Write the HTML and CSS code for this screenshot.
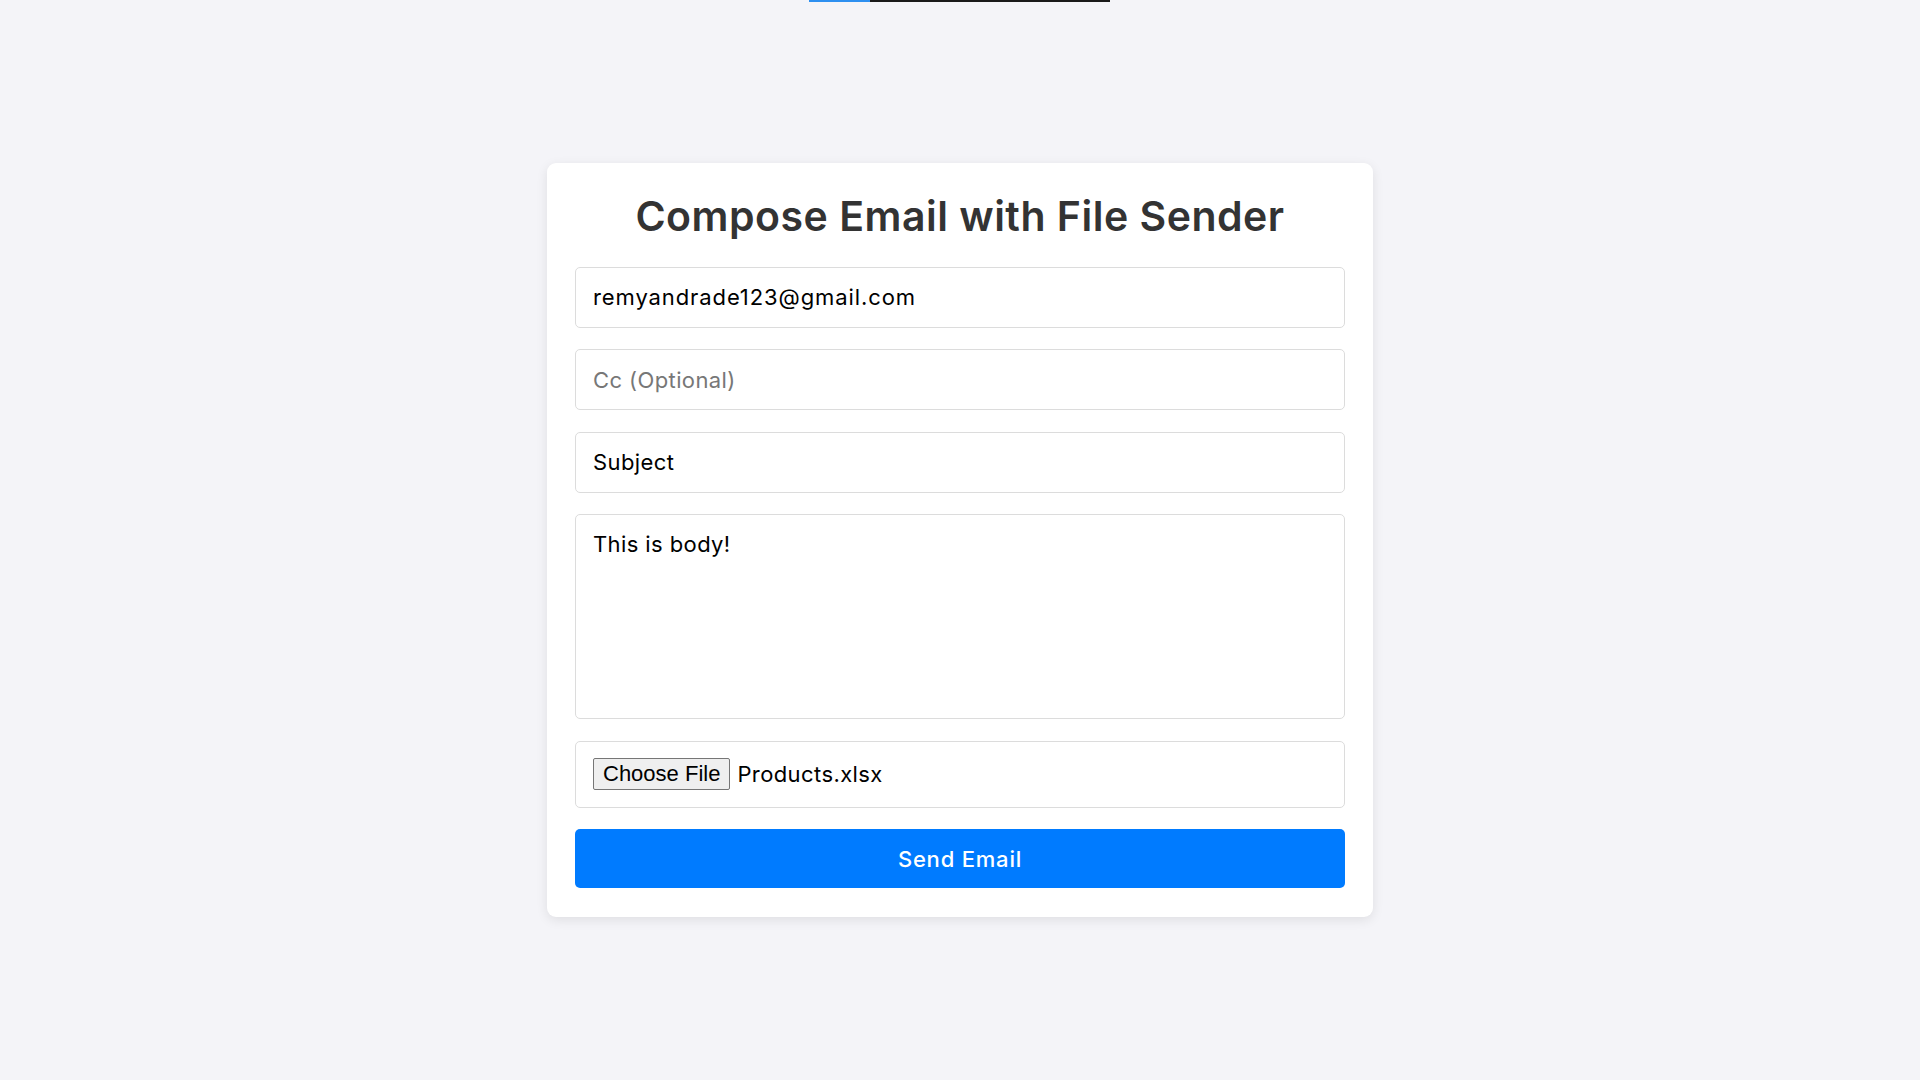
FILE: index.html
```html
<!DOCTYPE html>
<html lang="en">
<head>
<meta charset="utf-8">
<title>Compose Email with File Sender</title>
<link rel="stylesheet" href="styles.css">
</head>
<body>
<div class="topline"><span class="topline-blue"></span><span class="topline-dark"></span></div>
<main class="page">
  <div class="card">
    <h2 class="title">Compose Email with File Sender</h2>
    <form class="form">
      <input class="field field-email" type="email" value="remyandrade123@gmail.com">
      <input class="field" type="text" placeholder="Cc (Optional)">
      <input class="field" type="text" value="Subject">
      <textarea class="field area">This is body!</textarea>
      <div class="field file">
        <button type="button" class="file-btn">Choose File</button>
        <span class="file-name">Products.xlsx</span>
      </div>
      <button type="button" class="send">Send Email</button>
    </form>
  </div>
</main>
</body>
</html>
```
FILE: styles.css
```css
* { box-sizing: border-box; }
html, body { margin: 0; padding: 0; }
body {
  background: #f4f4f8;
  font-family: Inter, "Open Sans", sans-serif;
  color: #000;
}
.topline {
  position: absolute;
  top: 0;
  left: 809px;
  display: flex;
  height: 2px;
}
.topline-blue { width: 61px; background: #2d8ff0; }
.topline-dark { width: 240px; background: #1a1a1a; }
.page {
  min-height: 100vh;
  display: flex;
  align-items: center;
  justify-content: center;
}
.card {
  width: 826px;
  background: #fff;
  border-radius: 9px;
  padding: 28px 28px 29px;
  box-shadow: 0 3px 12px rgba(0, 0, 0, 0.09);
}
.title {
  margin: 0 0 26px;
  text-align: center;
  font-size: 41px;
  line-height: 50px;
  font-weight: 600;
  color: #333;
  letter-spacing: 0.5px;
}
.form {
  display: flex;
  flex-direction: column;
  gap: 21.5px;
}
.field {
  display: block;
  width: 100%;
  height: 61px;
  margin: 0;
  padding: 16px 17px;
  border: 1px solid #dcdcdc;
  border-radius: 5px;
  background: #fff;
  font-family: inherit;
  font-size: 22px;
  line-height: 27px;
  color: #000;
  letter-spacing: 0.4px;
  outline: none;
}
.field-email { letter-spacing: 0.9px; }
.field::placeholder { color: #777; }
.area {
  height: 205px;
  resize: none;
}
.file {
  height: 67px;
  display: flex;
  align-items: center;
  padding: 0 17px;
}
.file-btn {
  height: 32px;
  padding: 0 9px;
  margin: 0 7px 0 0;
  font-family: "Liberation Sans", Arial, sans-serif;
  font-size: 22px;
  color: #000;
  background: #efefef;
  border: 1px solid #767676;
  border-radius: 2px;
  letter-spacing: 0;
}
.file-name { font-size: 22px; }
.send {
  height: 59px;
  width: 100%;
  border: none;
  border-radius: 5px;
  background: #007bff;
  color: #fff;
  font-family: inherit;
  font-size: 22px;
  font-weight: 500;
  letter-spacing: 0.8px;
}
```
